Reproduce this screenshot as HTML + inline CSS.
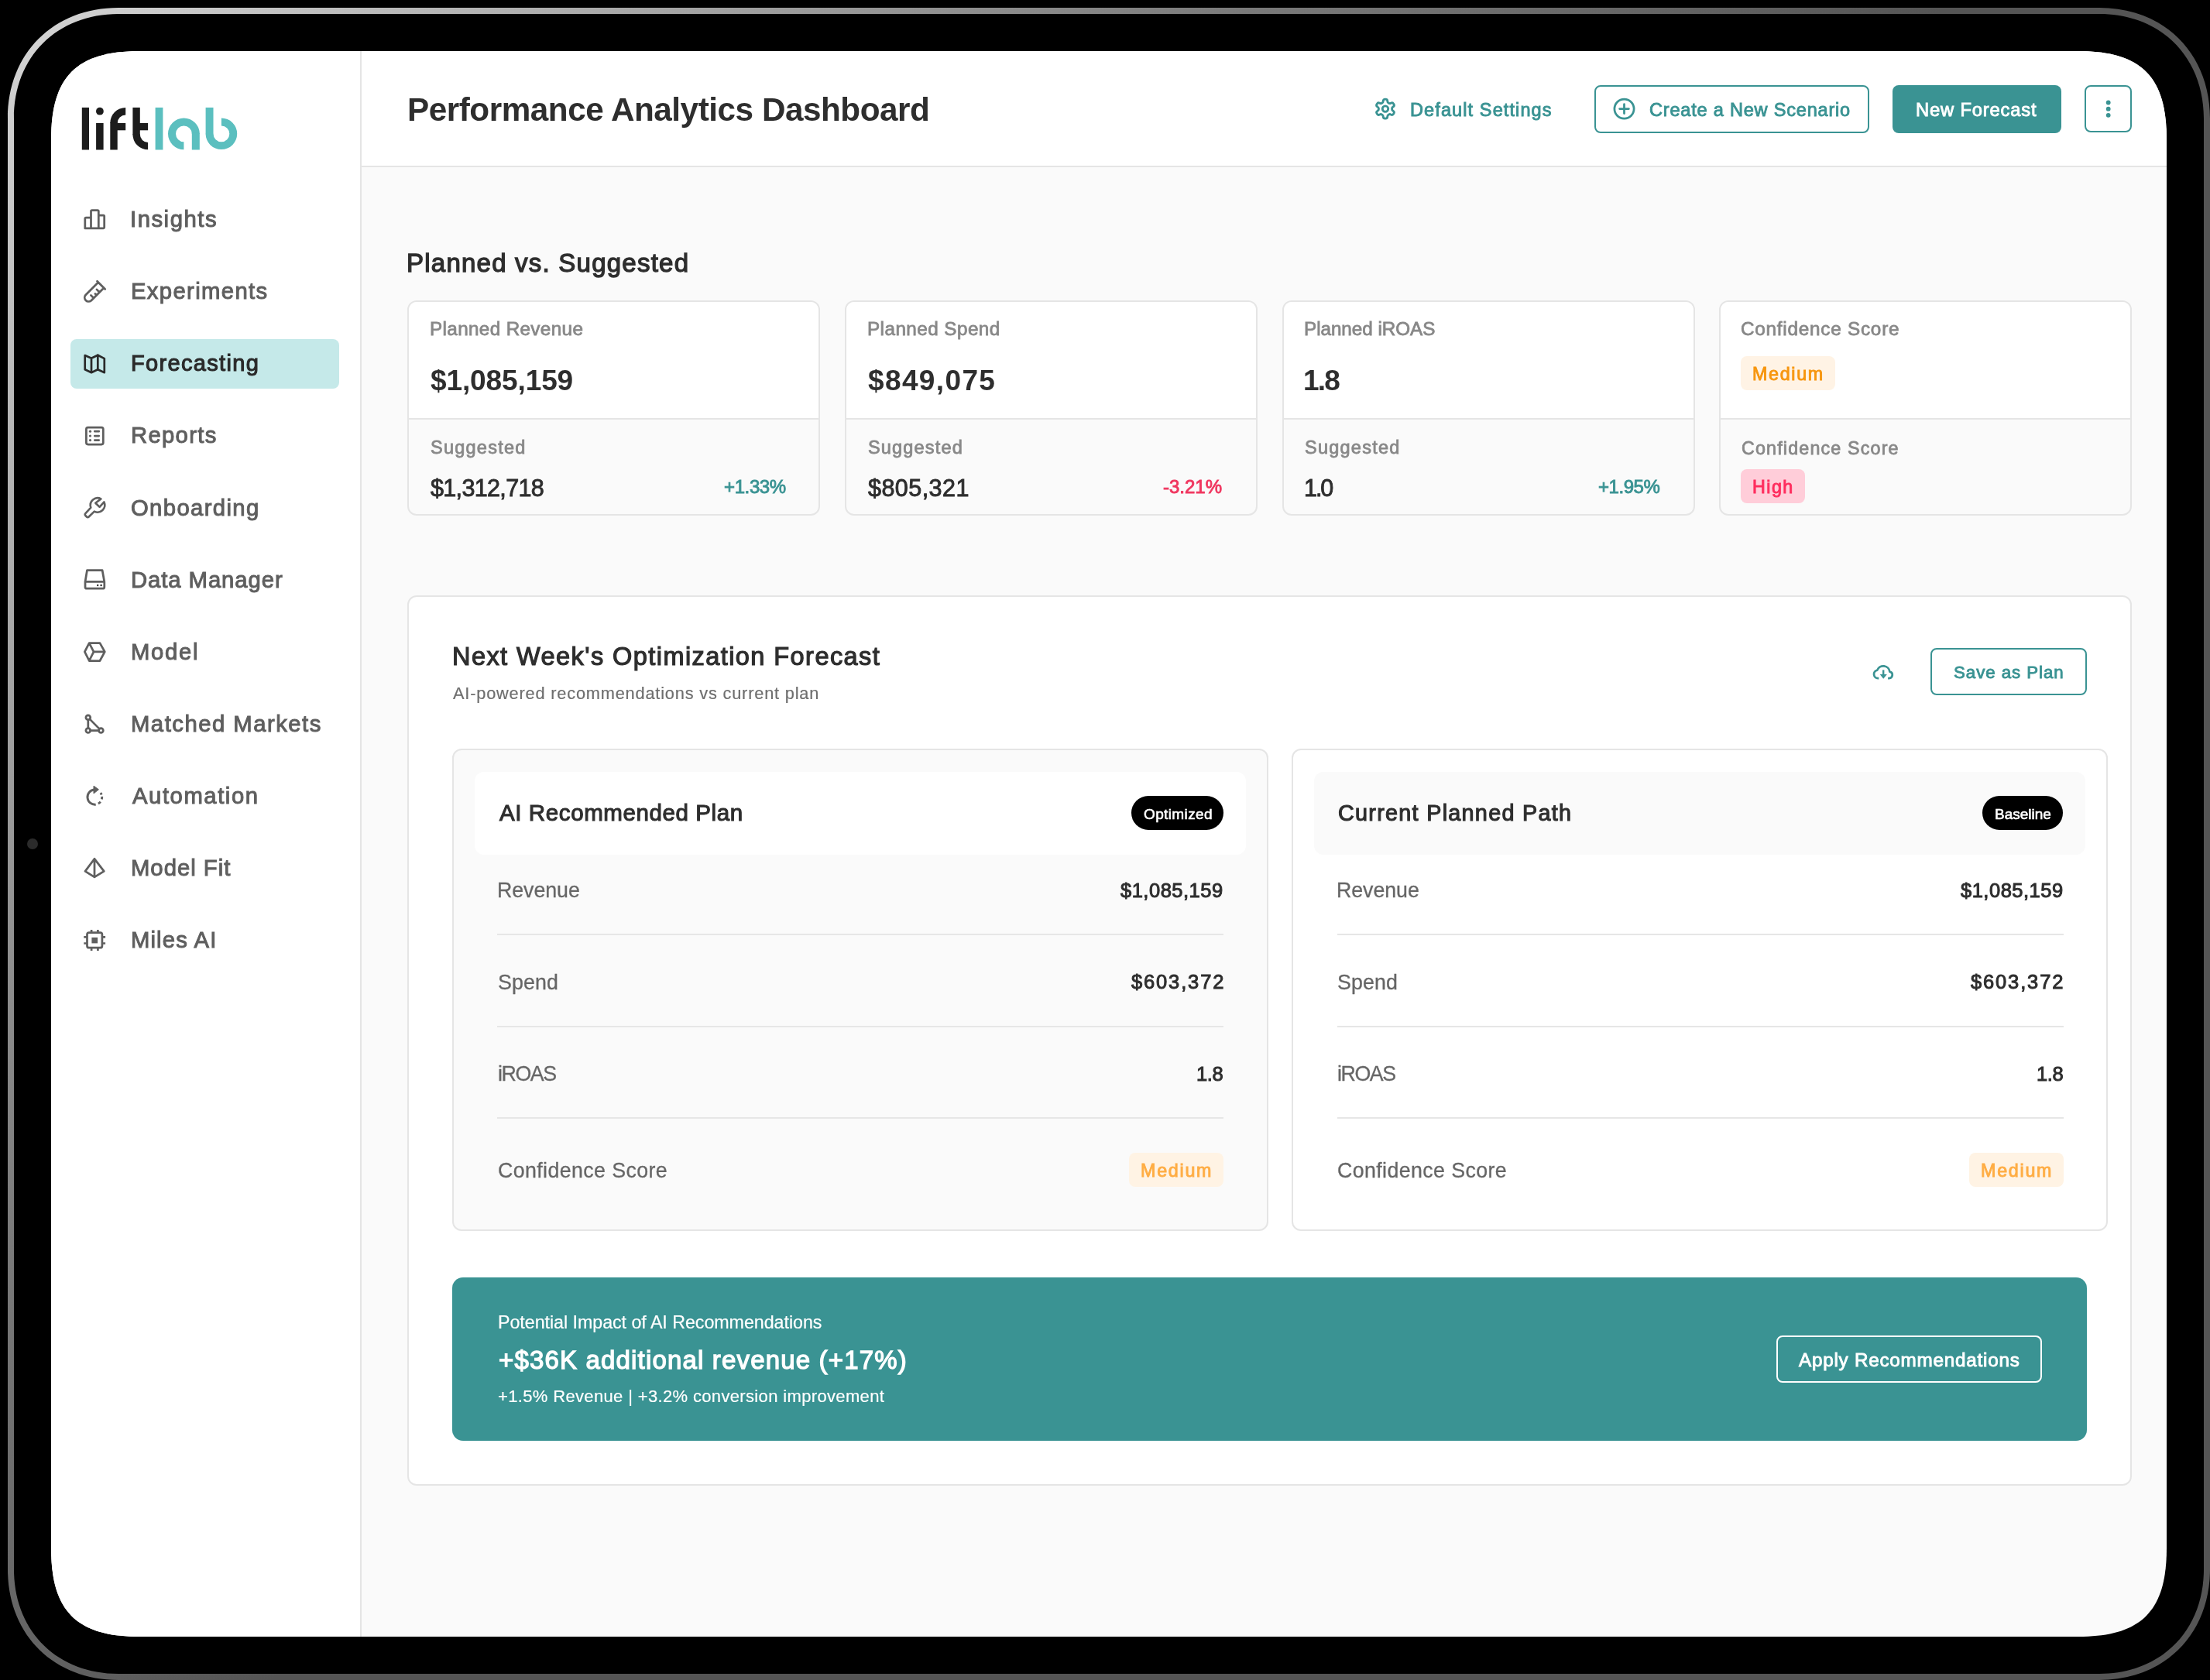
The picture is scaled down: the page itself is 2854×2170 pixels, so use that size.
<!DOCTYPE html>
<html><head><meta charset="utf-8"><title>liftlab - Performance Analytics Dashboard</title>
<style>
html,body{margin:0;padding:0;background:#000;width:2854px;height:2170px;overflow:hidden}
.cam{position:absolute;left:35px;top:1083px;width:14px;height:14px;border-radius:7px;background:#2b2b2b}
.scr{position:absolute;left:0;top:0;width:2854px;height:2170px;background:#fafafa;clip-path:path('M180.00,66.00 H2684.00 C2765.10,66.00 2798.00,98.90 2798.00,180.00 V2000.00 C2798.00,2081.10 2765.10,2114.00 2684.00,2114.00 H180.00 C98.90,2114.00 66.00,2081.10 66.00,2000.00 V180.00 C66.00,98.90 98.90,66.00 180.00,66.00 Z')}
.a{position:absolute;box-sizing:border-box}
.t{position:absolute;white-space:pre;font-family:"Liberation Sans",sans-serif;will-change:transform}
svg{position:absolute;left:0;top:0}
</style></head><body>
<svg width="2854" height="2170" viewBox="0 0 2854 2170"><defs><linearGradient id="rg" gradientUnits="userSpaceOnUse" x1="181.1" y1="-160.9" x2="2682.9" y2="2340.9"><stop offset="0" stop-color="#d6d6d6"/><stop offset="0.32" stop-color="#7a7a7a"/><stop offset="0.5" stop-color="#555"/><stop offset="1" stop-color="#555"/></linearGradient></defs><path fill="url(#rg)" fill-rule="evenodd" d="M153.00,10.00 H2711.00 C2795.00,10.00 2854.00,69.00 2854.00,153.00 V2027.00 C2854.00,2111.00 2795.00,2170.00 2711.00,2170.00 H153.00 C69.00,2170.00 10.00,2111.00 10.00,2027.00 V153.00 C10.00,69.00 69.00,10.00 153.00,10.00 Z M153.00,18.00 H2711.00 C2790.50,18.00 2846.00,73.50 2846.00,153.00 V2027.00 C2846.00,2106.50 2790.50,2162.00 2711.00,2162.00 H153.00 C73.50,2162.00 18.00,2106.50 18.00,2027.00 V153.00 C18.00,73.50 73.50,18.00 153.00,18.00 Z"/></svg><div class="cam"></div>
<div class="scr">
<div class="a" style="left:66.0px;top:66.0px;width:399.0px;height:2048.0px;background:#ffffff;"></div>
<div class="a" style="left:465.0px;top:66.0px;width:2.0px;height:2048.0px;background:#e5e5e5;"></div>
<div class="a" style="left:467.0px;top:66.0px;width:2331.0px;height:148.0px;background:#ffffff;"></div>
<div class="a" style="left:467.0px;top:214.0px;width:2331.0px;height:2.0px;background:#e5e5e5;"></div>
<div class="a" style="left:91.0px;top:438.0px;width:346.5px;height:64.0px;background:#c5e9e9;border-radius:8px;"></div>
<div class="a" style="left:2058.5px;top:109.5px;width:355.7px;height:62.0px;border:2px solid #3a9393;border-radius:8px;"></div>
<div class="a" style="left:2443.5px;top:109.8px;width:218.8px;height:61.8px;background:#3a9393;border-radius:8px;"></div>
<div class="a" style="left:2691.6px;top:110.3px;width:61.5px;height:61.0px;border:2px solid #3a9393;border-radius:8px;"></div>
<div class="a" style="left:526.0px;top:387.5px;width:533.0px;height:278.0px;background:#fafafa;border:2px solid #e5e5e5;border-radius:12px;overflow:hidden;"></div>
<div class="a" style="left:528.0px;top:389.5px;width:529px;height:151px;background:#fff;border-radius:10px 10px 0 0"></div>
<div class="a" style="left:528.0px;top:540.0px;width:529.0px;height:2.0px;background:#e5e5e5;"></div>
<div class="a" style="left:1090.8px;top:387.5px;width:533.0px;height:278.0px;background:#fafafa;border:2px solid #e5e5e5;border-radius:12px;overflow:hidden;"></div>
<div class="a" style="left:1092.8px;top:389.5px;width:529px;height:151px;background:#fff;border-radius:10px 10px 0 0"></div>
<div class="a" style="left:1092.8px;top:540.0px;width:529.0px;height:2.0px;background:#e5e5e5;"></div>
<div class="a" style="left:1655.5px;top:387.5px;width:533.0px;height:278.0px;background:#fafafa;border:2px solid #e5e5e5;border-radius:12px;overflow:hidden;"></div>
<div class="a" style="left:1657.5px;top:389.5px;width:529px;height:151px;background:#fff;border-radius:10px 10px 0 0"></div>
<div class="a" style="left:1657.5px;top:540.0px;width:529.0px;height:2.0px;background:#e5e5e5;"></div>
<div class="a" style="left:2219.5px;top:387.5px;width:533.0px;height:278.0px;background:#fafafa;border:2px solid #e5e5e5;border-radius:12px;overflow:hidden;"></div>
<div class="a" style="left:2221.5px;top:389.5px;width:529px;height:151px;background:#fff;border-radius:10px 10px 0 0"></div>
<div class="a" style="left:2221.5px;top:540.0px;width:529.0px;height:2.0px;background:#e5e5e5;"></div>
<div class="a" style="left:2248.0px;top:460.2px;width:121.8px;height:43.4px;background:#fff3e5;border-radius:8px;"></div>
<div class="a" style="left:2247.7px;top:606.0px;width:83.5px;height:43.8px;background:#ffcdd9;border-radius:8px;"></div>
<div class="a" style="left:526.0px;top:769.0px;width:2227.0px;height:1150.0px;background:#ffffff;border:2px solid #e5e5e5;border-radius:12px;"></div>
<div class="a" style="left:2493.2px;top:837.4px;width:201.5px;height:61.0px;border:2px solid #3a9393;border-radius:8px;"></div>
<div class="a" style="left:584.0px;top:967.3px;width:1054.3px;height:622.7px;background:#fafafa;border:2px solid #e5e5e5;border-radius:12px;"></div>
<div class="a" style="left:613.2px;top:996.6px;width:996.3px;height:107.4px;background:#ffffff;border-radius:12px;"></div>
<div class="a" style="left:1668.3px;top:967.3px;width:1053.7px;height:622.7px;background:#ffffff;border:2px solid #e5e5e5;border-radius:12px;"></div>
<div class="a" style="left:1697.1px;top:996.6px;width:995.9px;height:107.4px;background:#fafafa;border-radius:12px;"></div>
<div class="a" style="left:642.0px;top:1205.5px;width:938.0px;height:2.0px;background:#e6e6e6;"></div>
<div class="a" style="left:642.0px;top:1324.5px;width:938.0px;height:2.0px;background:#e6e6e6;"></div>
<div class="a" style="left:642.0px;top:1443.3px;width:938.0px;height:2.0px;background:#e6e6e6;"></div>
<div class="a" style="left:1726.5px;top:1205.5px;width:938.0px;height:2.0px;background:#e6e6e6;"></div>
<div class="a" style="left:1726.5px;top:1324.5px;width:938.0px;height:2.0px;background:#e6e6e6;"></div>
<div class="a" style="left:1726.5px;top:1443.3px;width:938.0px;height:2.0px;background:#e6e6e6;"></div>
<div class="a" style="left:1461.3px;top:1028.3px;width:118.9px;height:43.6px;background:#000000;border-radius:22px;"></div>
<div class="a" style="left:2560.0px;top:1028.3px;width:104.0px;height:43.6px;background:#000000;border-radius:22px;"></div>
<div class="a" style="left:1458.2px;top:1489.2px;width:122.0px;height:43.4px;background:#fff3e4;border-radius:8px;"></div>
<div class="a" style="left:2542.7px;top:1489.2px;width:122.0px;height:43.4px;background:#fff3e4;border-radius:8px;"></div>
<div class="a" style="left:583.7px;top:1650.0px;width:2111.8px;height:211.2px;background:#3a9393;border-radius:14px;"></div>
<div class="a" style="left:2294.0px;top:1725.0px;width:342.5px;height:61.3px;border:2px solid #ffffff;border-radius:8px;"></div>
<div class="t" style="left:525.90px;top:121.10px;font-size:42.25px;line-height:42.25px;letter-spacing:-0.463px;color:#2e2e2e;font-weight:bold;">Performance Analytics Dashboard</div>
<div class="t" style="left:1820.90px;top:130.55px;font-size:23.5px;line-height:23.5px;letter-spacing:1.107px;color:#3a9393;-webkit-text-stroke:0.9px #3a9393;">Default Settings</div>
<div class="t" style="left:2129.60px;top:130.55px;font-size:23.5px;line-height:23.5px;letter-spacing:0.810px;color:#3a9393;-webkit-text-stroke:0.9px #3a9393;">Create a New Scenario</div>
<div class="t" style="left:2473.80px;top:129.65px;font-size:23.75px;line-height:23.75px;letter-spacing:0.827px;color:#ffffff;-webkit-text-stroke:0.9px #ffffff;">New Forecast</div>
<div class="t" style="left:167.50px;top:269.25px;font-size:29.25px;line-height:29.25px;letter-spacing:1.529px;color:#5f5f5f;-webkit-text-stroke:1.0px #5f5f5f;">Insights</div>
<div class="t" style="left:168.50px;top:362.33px;font-size:29.25px;line-height:29.25px;letter-spacing:1.360px;color:#5f5f5f;-webkit-text-stroke:1.0px #5f5f5f;">Experiments</div>
<div class="t" style="left:168.50px;top:455.41px;font-size:29.0px;line-height:29.0px;letter-spacing:1.330px;color:#2a2a2a;-webkit-text-stroke:1.1px #2a2a2a;">Forecasting</div>
<div class="t" style="left:168.50px;top:548.49px;font-size:29.25px;line-height:29.25px;letter-spacing:1.317px;color:#5f5f5f;-webkit-text-stroke:1.0px #5f5f5f;">Reports</div>
<div class="t" style="left:168.50px;top:641.57px;font-size:29.25px;line-height:29.25px;letter-spacing:1.367px;color:#5f5f5f;-webkit-text-stroke:1.0px #5f5f5f;">Onboarding</div>
<div class="t" style="left:168.50px;top:734.65px;font-size:29.25px;line-height:29.25px;letter-spacing:0.936px;color:#5f5f5f;-webkit-text-stroke:1.0px #5f5f5f;">Data Manager</div>
<div class="t" style="left:168.50px;top:827.73px;font-size:29.25px;line-height:29.25px;letter-spacing:1.700px;color:#5f5f5f;-webkit-text-stroke:1.0px #5f5f5f;">Model</div>
<div class="t" style="left:168.50px;top:920.81px;font-size:29.25px;line-height:29.25px;letter-spacing:1.500px;color:#5f5f5f;-webkit-text-stroke:1.0px #5f5f5f;">Matched Markets</div>
<div class="t" style="left:170.50px;top:1013.89px;font-size:29.25px;line-height:29.25px;letter-spacing:1.556px;color:#5f5f5f;-webkit-text-stroke:1.0px #5f5f5f;">Automation</div>
<div class="t" style="left:168.50px;top:1106.97px;font-size:29.25px;line-height:29.25px;letter-spacing:1.000px;color:#5f5f5f;-webkit-text-stroke:1.0px #5f5f5f;">Model Fit</div>
<div class="t" style="left:168.50px;top:1200.05px;font-size:29.25px;line-height:29.25px;letter-spacing:1.129px;color:#5f5f5f;-webkit-text-stroke:1.0px #5f5f5f;">Miles AI</div>
<div class="t" style="left:524.60px;top:322.90px;font-size:33.0px;line-height:33.0px;letter-spacing:1.230px;color:#2e2e2e;-webkit-text-stroke:1.3px #2e2e2e;">Planned vs. Suggested</div>
<div class="t" style="left:554.80px;top:412.60px;font-size:24.25px;line-height:24.25px;letter-spacing:0.364px;color:#888888;-webkit-text-stroke:0.8px #888888;">Planned Revenue</div>
<div class="t" style="left:1119.60px;top:412.60px;font-size:24.25px;line-height:24.25px;letter-spacing:0.450px;color:#888888;-webkit-text-stroke:0.8px #888888;">Planned Spend</div>
<div class="t" style="left:1684.30px;top:412.60px;font-size:24.25px;line-height:24.25px;letter-spacing:-0.042px;color:#888888;-webkit-text-stroke:0.8px #888888;">Planned iROAS</div>
<div class="t" style="left:2248.30px;top:412.60px;font-size:24.25px;line-height:24.25px;letter-spacing:0.780px;color:#888888;-webkit-text-stroke:0.8px #888888;">Confidence Score</div>
<div class="t" style="left:555.80px;top:473.05px;font-size:37.0px;line-height:37.0px;letter-spacing:-0.111px;color:#2e2e2e;font-weight:bold;">$1,085,159</div>
<div class="t" style="left:1120.60px;top:473.05px;font-size:37.0px;line-height:37.0px;letter-spacing:1.371px;color:#2e2e2e;font-weight:bold;">$849,075</div>
<div class="t" style="left:1683.30px;top:473.05px;font-size:37.0px;line-height:37.0px;letter-spacing:-1.850px;color:#2e2e2e;font-weight:bold;">1.8</div>
<div class="t" style="left:555.80px;top:566.90px;font-size:23.5px;line-height:23.5px;letter-spacing:1.238px;color:#888888;-webkit-text-stroke:0.8px #888888;">Suggested</div>
<div class="t" style="left:1120.60px;top:566.90px;font-size:23.5px;line-height:23.5px;letter-spacing:1.175px;color:#888888;-webkit-text-stroke:0.8px #888888;">Suggested</div>
<div class="t" style="left:1685.30px;top:566.90px;font-size:23.5px;line-height:23.5px;letter-spacing:1.238px;color:#888888;-webkit-text-stroke:0.8px #888888;">Suggested</div>
<div class="t" style="left:2249.30px;top:567.50px;font-size:23.25px;line-height:23.25px;letter-spacing:1.180px;color:#888888;-webkit-text-stroke:0.8px #888888;">Confidence Score</div>
<div class="t" style="left:555.80px;top:615.05px;font-size:30.5px;line-height:30.5px;letter-spacing:-0.656px;color:#2e2e2e;-webkit-text-stroke:0.9px #2e2e2e;">$1,312,718</div>
<div class="t" style="left:1120.60px;top:615.05px;font-size:30.5px;line-height:30.5px;letter-spacing:0.457px;color:#2e2e2e;-webkit-text-stroke:0.9px #2e2e2e;">$805,321</div>
<div class="t" style="left:1684.30px;top:615.05px;font-size:30.5px;line-height:30.5px;letter-spacing:-2.050px;color:#2e2e2e;-webkit-text-stroke:0.9px #2e2e2e;">1.0</div>
<div class="t" style="left:934.50px;top:616.70px;font-size:24.0px;line-height:24.0px;letter-spacing:-0.380px;color:#3a9393;-webkit-text-stroke:0.9px #3a9393;">+1.33%</div>
<div class="t" style="left:1502.10px;top:616.70px;font-size:24.0px;line-height:24.0px;letter-spacing:0.000px;color:#f0365f;-webkit-text-stroke:0.9px #f0365f;">-3.21%</div>
<div class="t" style="left:2063.60px;top:616.70px;font-size:24.0px;line-height:24.0px;letter-spacing:-0.460px;color:#3a9393;-webkit-text-stroke:0.9px #3a9393;">+1.95%</div>
<div class="t" style="left:2262.60px;top:471.95px;font-size:23.25px;line-height:23.25px;letter-spacing:1.700px;color:#f7960f;-webkit-text-stroke:0.9px #f7960f;">Medium</div>
<div class="t" style="left:2262.60px;top:617.75px;font-size:23.25px;line-height:23.25px;letter-spacing:1.467px;color:#ff2d5e;-webkit-text-stroke:0.9px #ff2d5e;">High</div>
<div class="t" style="left:584.00px;top:832.30px;font-size:32.5px;line-height:32.5px;letter-spacing:1.434px;color:#2e2e2e;-webkit-text-stroke:1.2px #2e2e2e;">Next Week's Optimization Forecast</div>
<div class="t" style="left:584.90px;top:885.00px;font-size:21.75px;line-height:21.75px;letter-spacing:0.817px;color:#6e6e6e;-webkit-text-stroke:0.2px #6e6e6e;">AI-powered recommendations vs current plan</div>
<div class="t" style="left:2523.00px;top:858.05px;font-size:22.25px;line-height:22.25px;letter-spacing:0.964px;color:#3a9393;-webkit-text-stroke:0.9px #3a9393;">Save as Plan</div>
<div class="t" style="left:644.90px;top:1035.20px;font-size:29.5px;line-height:29.5px;letter-spacing:0.600px;color:#2e2e2e;-webkit-text-stroke:1.1px #2e2e2e;">AI Recommended Plan</div>
<div class="t" style="left:1727.80px;top:1036.05px;font-size:28.75px;line-height:28.75px;letter-spacing:1.289px;color:#2e2e2e;-webkit-text-stroke:1.1px #2e2e2e;">Current Planned Path</div>
<div class="t" style="left:1477.00px;top:1041.55px;font-size:19.0px;line-height:19.0px;letter-spacing:0.375px;color:#ffffff;-webkit-text-stroke:0.6px #ffffff;">Optimized</div>
<div class="t" style="left:2576.00px;top:1041.55px;font-size:19.0px;line-height:19.0px;letter-spacing:0.000px;color:#ffffff;-webkit-text-stroke:0.6px #ffffff;">Baseline</div>
<div class="t" style="left:641.70px;top:1137.40px;font-size:26.75px;line-height:26.75px;letter-spacing:-0.050px;color:#666666;-webkit-text-stroke:0.3px #666666;">Revenue</div>
<div class="t" style="left:642.70px;top:1255.70px;font-size:26.75px;line-height:26.75px;letter-spacing:0.150px;color:#666666;-webkit-text-stroke:0.3px #666666;">Spend</div>
<div class="t" style="left:642.70px;top:1374.30px;font-size:26.75px;line-height:26.75px;letter-spacing:-1.425px;color:#666666;-webkit-text-stroke:0.3px #666666;">iROAS</div>
<div class="t" style="left:642.70px;top:1498.90px;font-size:26.75px;line-height:26.75px;letter-spacing:0.400px;color:#666666;-webkit-text-stroke:0.3px #666666;">Confidence Score</div>
<div class="t" style="left:1447.20px;top:1137.50px;font-size:25.5px;line-height:25.5px;letter-spacing:0.500px;color:#2e2e2e;-webkit-text-stroke:1.0px #2e2e2e;">$1,085,159</div>
<div class="t" style="left:1460.50px;top:1256.20px;font-size:25.5px;line-height:25.5px;letter-spacing:1.857px;color:#2e2e2e;-webkit-text-stroke:1.0px #2e2e2e;">$603,372</div>
<div class="t" style="left:1545.25px;top:1374.95px;font-size:25.5px;line-height:25.5px;letter-spacing:-0.375px;color:#2e2e2e;-webkit-text-stroke:1.0px #2e2e2e;">1.8</div>
<div class="t" style="left:1473.00px;top:1500.90px;font-size:23.25px;line-height:23.25px;letter-spacing:1.760px;color:#ffad44;-webkit-text-stroke:0.9px #ffad44;">Medium</div>
<div class="t" style="left:1726.20px;top:1137.40px;font-size:26.75px;line-height:26.75px;letter-spacing:-0.050px;color:#666666;-webkit-text-stroke:0.3px #666666;">Revenue</div>
<div class="t" style="left:1727.20px;top:1255.70px;font-size:26.75px;line-height:26.75px;letter-spacing:0.150px;color:#666666;-webkit-text-stroke:0.3px #666666;">Spend</div>
<div class="t" style="left:1727.20px;top:1374.30px;font-size:26.75px;line-height:26.75px;letter-spacing:-1.425px;color:#666666;-webkit-text-stroke:0.3px #666666;">iROAS</div>
<div class="t" style="left:1727.20px;top:1498.90px;font-size:26.75px;line-height:26.75px;letter-spacing:0.400px;color:#666666;-webkit-text-stroke:0.3px #666666;">Confidence Score</div>
<div class="t" style="left:2531.70px;top:1137.50px;font-size:25.5px;line-height:25.5px;letter-spacing:0.500px;color:#2e2e2e;-webkit-text-stroke:1.0px #2e2e2e;">$1,085,159</div>
<div class="t" style="left:2545.00px;top:1256.20px;font-size:25.5px;line-height:25.5px;letter-spacing:1.857px;color:#2e2e2e;-webkit-text-stroke:1.0px #2e2e2e;">$603,372</div>
<div class="t" style="left:2629.75px;top:1374.95px;font-size:25.5px;line-height:25.5px;letter-spacing:-0.375px;color:#2e2e2e;-webkit-text-stroke:1.0px #2e2e2e;">1.8</div>
<div class="t" style="left:2557.50px;top:1500.90px;font-size:23.25px;line-height:23.25px;letter-spacing:1.760px;color:#ffad44;-webkit-text-stroke:0.9px #ffad44;">Medium</div>
<div class="t" style="left:642.50px;top:1696.90px;font-size:23.25px;line-height:23.25px;letter-spacing:-0.043px;color:#ffffff;-webkit-text-stroke:0.2px #ffffff;">Potential Impact of AI Recommendations</div>
<div class="t" style="left:644.00px;top:1740.00px;font-size:33.0px;line-height:33.0px;letter-spacing:1.167px;color:#ffffff;-webkit-text-stroke:1.3px #ffffff;">+$36K additional revenue (+17%)</div>
<div class="t" style="left:642.50px;top:1793.40px;font-size:22.0px;line-height:22.0px;letter-spacing:0.349px;color:#ffffff;-webkit-text-stroke:0.2px #ffffff;">+1.5% Revenue | +3.2% conversion improvement</div>
<div class="t" style="left:2322.90px;top:1744.55px;font-size:24.25px;line-height:24.25px;letter-spacing:0.760px;color:#ffffff;-webkit-text-stroke:0.9px #ffffff;">Apply Recommendations</div>
<svg width="2854" height="2170" viewBox="0 0 2854 2170"><g fill="#1c1c1c">
<rect x="105.8" y="138.9" width="9.2" height="54.6"/>
<circle cx="128.9" cy="143.7" r="4.9"/>
<rect x="124.1" y="159" width="9.5" height="34.5"/>
<path d="M142.3,158.9 A19.9,19.9 0 0 1 162.2,139 L162.2,148.4 A10.5,10.5 0 0 0 151.7,158.9 Z"/>
<rect x="142.3" y="158.2" width="9.4" height="35.3"/>
<rect x="151" y="159" width="11.2" height="9.3"/>
<rect x="171.4" y="138.9" width="9.4" height="35.4"/>
<path d="M171.4,173.2 V173.6 A19.7,19.7 0 0 0 191.1,193.3 L191.1,183.9 A10.3,10.3 0 0 1 180.8,173.6 V173.2 Z"/>
<rect x="180" y="159" width="11.1" height="9.3"/>
</g><g fill="#5bbfbf">
<rect x="200.6" y="138.9" width="9.8" height="54.6"/>
<path d="M237.4,193.2 A20.4,20.4 0 1 1 257.8,172.8 L247.8,172.8 A10.4,10.4 0 1 0 237.4,183.2 Z"/>
<rect x="247.8" y="171.8" width="10" height="21.7"/>
<rect x="265.6" y="138.9" width="9.9" height="34.4"/>
<path d="M265.6,172.8 A20.3,20.3 0 1 0 285.9,152.5 L285.9,162.4 A10.4,10.4 0 1 1 275.5,172.8 Z"/>
</g>
<g fill="none" stroke="#5f5f5f" stroke-width="2.75" stroke-linecap="round" stroke-linejoin="round">
<path d="M109.8,294.9 V282.4 a1.3,1.3 0 0 1 1.3,-1.3 H117.5 V272.8 a1.3,1.3 0 0 1 1.3,-1.3 H126 a1.3,1.3 0 0 1 1.3,1.3 V278 H133.4 a1.3,1.3 0 0 1 1.3,1.3 V293.6 a1.3,1.3 0 0 1 -1.3,1.3 H111.1 a1.3,1.3 0 0 1 -1.3,-1.3 Z M117.5,281.1 V294.9 M127.3,278 V294.9"/>
<path d="M125.55,366.05 L110.6,381 A5.1,5.1 0 0 0 117.8,388.2 L132.75,373.25 M125.5,363.3 L135.7,373.5 M128.5,377.5 L124.9,373.9 M124.75,381.25 L122.95,379.45 M121,385 L117.4,381.4"/>
</g>
<g fill="none" stroke="#2a2a2a" stroke-width="2.7" stroke-linecap="round" stroke-linejoin="round">
<path d="M109.7,459.1 L118,462.7 L126.3,458.7 L134.8,463.1 L134.8,481.2 L126.3,477.2 L118,481.2 L109.7,477.2 Z M118,462.7 V481.2 M126.3,458.7 V477.2"/>
</g>
<g fill="none" stroke="#5f5f5f" stroke-width="2.75" stroke-linecap="round" stroke-linejoin="round">
<rect x="111.4" y="552.1" width="21.9" height="21.9" rx="2.2"/>
<path d="M122.3,557.2 H127.7 M122.3,563 H127.7 M122.3,568.6 H127.7"/>
</g>
<g fill="#5f5f5f"><circle cx="116.5" cy="557.2" r="1.6"/><circle cx="116.5" cy="563" r="1.6"/><circle cx="116.5" cy="568.6" r="1.6"/></g>
<path d="M121.8,660.6 L114.7,667.5 Q113.3,668.9 111.9,667.5 L110.4,666 Q109,664.6 110.4,663.2 L117.3,655.7 A9.3,9.3 0 0 1 130.4,644.4 L123.3,649.7 L128.6,654.9 L134.4,648.4 A9.3,9.3 0 0 1 121.8,660.6 Z" fill="none" stroke="#5f5f5f" stroke-width="2.6" stroke-linejoin="round"/>
<g fill="none" stroke="#5f5f5f" stroke-width="2.75" stroke-linecap="round" stroke-linejoin="round">
<path d="M110,751.4 L112.5,736.5 H132.1 L134.8,751.4 V758.2 Q134.8,760.2 132.8,760.2 H112 Q110,760.2 110,758.2 Z M110,751.4 H134.8"/>
</g>
<g fill="#2a2a2a"><circle cx="126.2" cy="756" r="1.2"/><circle cx="130.6" cy="756" r="1.2"/></g>
<g fill="none" stroke="#5f5f5f" stroke-width="2.75" stroke-linecap="round" stroke-linejoin="round">
<path d="M109.4,841.9 L115.2,830.7 H129 L135.3,841.9 L129,853.5 H115.2 Z M115.2,830.7 L121,841.9 L115.2,853.5 M121,841.9 H135.3"/>
<circle cx="113.8" cy="926.8" r="2.9"/><circle cx="113.8" cy="943.5" r="2.9"/><circle cx="130.4" cy="943.5" r="2.9"/>
<path d="M113.8,929.7 V940.6 M116.7,943.5 H127.5 M115.9,928.9 L128.3,941.4"/>
<path d="M123.7,1039.2 A9.6,9.6 0 0 1 121.5,1020" stroke-width="2.9" stroke-linecap="butt"/>
<path d="M129.87,1024.16 A9.6,9.6 0 0 1 131.12,1026.52" stroke-width="2.9" stroke-linecap="butt"/>
<path d="M131.66,1028.96 A9.6,9.6 0 0 1 131.37,1032.28" stroke-width="2.9" stroke-linecap="butt"/>
<path d="M129.77,1035.58 A9.6,9.6 0 0 1 126.90,1038.11" stroke-width="2.9" stroke-linecap="butt"/>
</g>
<path d="M121,1015.2 L127.4,1019.8 L121,1025 Z" fill="#5f5f5f" stroke="#5f5f5f" stroke-width="1" stroke-linejoin="round"/>
<g fill="none" stroke="#5f5f5f" stroke-width="2.75" stroke-linecap="round" stroke-linejoin="round">
<path d="M122,1109.3 L110,1125.4 L122,1132.9 L134.3,1125.4 Z M122,1109.3 V1132.9"/>
<rect x="112.5" y="1204.5" width="19.4" height="19.7" rx="2.5"/>
<path d="M118.1,1200.9 V1204 M126.4,1200.9 V1204 M118.1,1224.7 V1228 M126.4,1224.7 V1228 M108.3,1210.3 H112 M108.3,1218.5 H112 M132.4,1210.3 H136.1 M132.4,1218.5 H136.1" stroke-linecap="butt" stroke-width="2.7"/>
</g>
<rect x="118.4" y="1210.9" width="7.7" height="7.5" fill="#5f5f5f"/>
<g transform="translate(1774,125.6) scale(1.25)" fill="none" stroke="#3a9393" stroke-width="2.3" stroke-linecap="round" stroke-linejoin="round"><path d="M12.22 2h-.44a2 2 0 0 0-2 2v.18a2 2 0 0 1-1 1.73l-.43.25a2 2 0 0 1-2 0l-.15-.08a2 2 0 0 0-2.73.73l-.22.38a2 2 0 0 0 .73 2.73l.15.1a2 2 0 0 1 1 1.72v.51a2 2 0 0 1-1 1.74l-.15.09a2 2 0 0 0-.73 2.73l.22.38a2 2 0 0 0 2.73.73l.15-.08a2 2 0 0 1 2 0l.43.25a2 2 0 0 1 1 1.73V20a2 2 0 0 0 2 2h.44a2 2 0 0 0 2-2v-.18a2 2 0 0 1 1-1.73l.43-.25a2 2 0 0 1 2 0l.15.08a2 2 0 0 0 2.73-.73l.22-.39a2 2 0 0 0-.73-2.73l-.15-.08a2 2 0 0 1-1-1.74v-.5a2 2 0 0 1 1-1.74l.15-.09a2 2 0 0 0 .73-2.73l-.22-.38a2 2 0 0 0-2.73-.73l-.15.08a2 2 0 0 1-2 0l-.43-.25a2 2 0 0 1-1-1.73V4a2 2 0 0 0-2-2z"/><circle cx="12" cy="12" r="3"/></g>
<g fill="none" stroke="#3a9393" stroke-width="2.75" stroke-linecap="round" stroke-linejoin="round">
<circle cx="2097.5" cy="140.6" r="12.6"/><path d="M2091.6,140.6 H2103.4 M2097.5,134.7 V146.5"/>
<path d="M2426.3,876.1 L2425.2,876.1 A5.3,5.3 0 0 1 2424.3,865.6 A8.4,8.4 0 0 1 2440.4,867.6 A4.3,4.3 0 0 1 2439.6,876.1 L2438.1,876.1" stroke-linecap="butt"/>
<path d="M2432.2,865.4 V872" stroke-width="2.4" stroke-linecap="butt"/>
</g>
<path d="M2427.7,871.1 L2436.9,871.1 L2432.2,876.8 Z" fill="#3a9393"/>
<g fill="#3a9393"><circle cx="2722.7" cy="132.5" r="2.9"/><circle cx="2722.7" cy="140.7" r="2.9"/><circle cx="2722.7" cy="148.8" r="2.9"/></g></svg>
</div>
</body></html>
